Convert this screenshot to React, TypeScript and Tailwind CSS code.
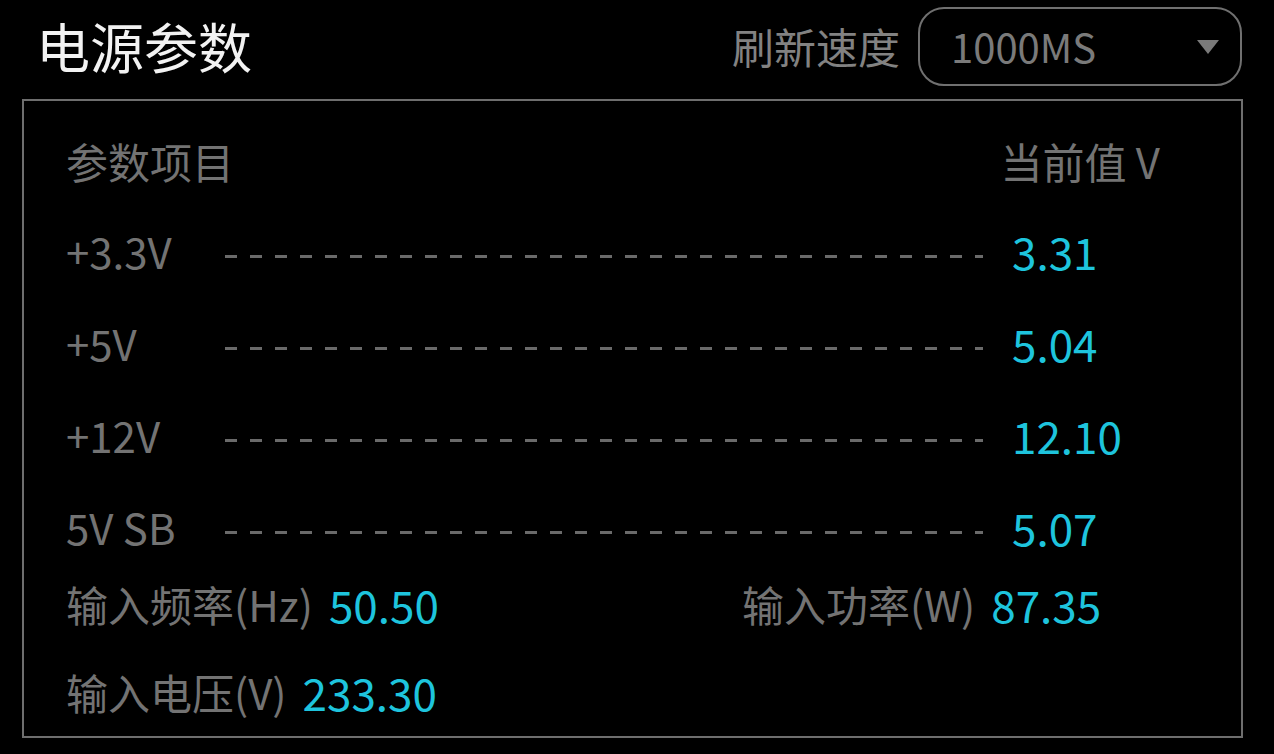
const rails = [
  { label: '+3.3V', value: '3.31' },
  { label: '+5V', value: '5.04' },
  { label: '+12V', value: '12.10' },
  { label: '5V SB', value: '5.07' },
]

const font = "font-['Noto_Sans_CJK_SC','Noto_Sans',sans-serif]"

function Dashes() {
  return (
    <div className="mt-[10px] h-[3px] flex-1 bg-[repeating-linear-gradient(to_right,#6a6a6a_0_12px,transparent_12px_25px)]" />
  )
}

export default function App() {
  return (
    <div className={`h-[754px] w-[1274px] overflow-hidden bg-black ${font}`}>
      <div className="flex h-[92px] items-center justify-between pl-[36px] pr-[32px]">
        <h1 className="text-[54px] leading-none text-[#f2f2f2]">电源参数</h1>
        <div className="flex items-center gap-[18px]">
          <span className="text-[42px] leading-none text-[#828282]">刷新速度</span>
          <button
            className="flex h-[79px] w-[324px] items-center justify-between rounded-[26px] border-2 border-[#707070] pl-[31px] pr-[20px]"
            type="button"
          >
            <span className="text-[40px] leading-none text-[#7a7a7a]">1000MS</span>
            <svg className="mt-[2px]" width="24" height="16" viewBox="0 0 24 16">
              <path d="M1 1h22L12 15z" fill="#7a7a7a" />
            </svg>
          </button>
        </div>
      </div>

      <div className="ml-[22px] mt-[7px] flex h-[639px] w-[1221px] flex-col border-2 border-[#6e6e6e] pl-[42px] pr-[81px] pt-[16px] text-[42px] leading-none text-[#737373]">
        <div className="flex h-[88px] items-center justify-between">
          <span>参数项目</span>
          <span>当前值 V</span>
        </div>

        {rails.map((r) => (
          <div key={r.label} className="flex h-[92px] items-center">
            <span className="w-[159px]">{r.label}</span>
            <Dashes />
            <span className="ml-[29px] w-[148px] text-[44px] text-[#1ec4dd]">{r.value}</span>
          </div>
        ))}

        <div className="mt-[6px] flex h-[50px] items-center">
          <div className="flex w-[676px] items-center">
            <span>输入频率(Hz)</span>
            <span className="ml-[16px] text-[44px] text-[#1ec4dd]">50.50</span>
          </div>
          <div className="flex items-center">
            <span>输入功率(W)</span>
            <span className="ml-[16px] text-[44px] text-[#1ec4dd]">87.35</span>
          </div>
        </div>

        <div className="mt-[38px] flex h-[50px] items-center">
          <span>输入电压(V)</span>
          <span className="ml-[16px] text-[44px] text-[#1ec4dd]">233.30</span>
        </div>
      </div>
    </div>
  )
}
